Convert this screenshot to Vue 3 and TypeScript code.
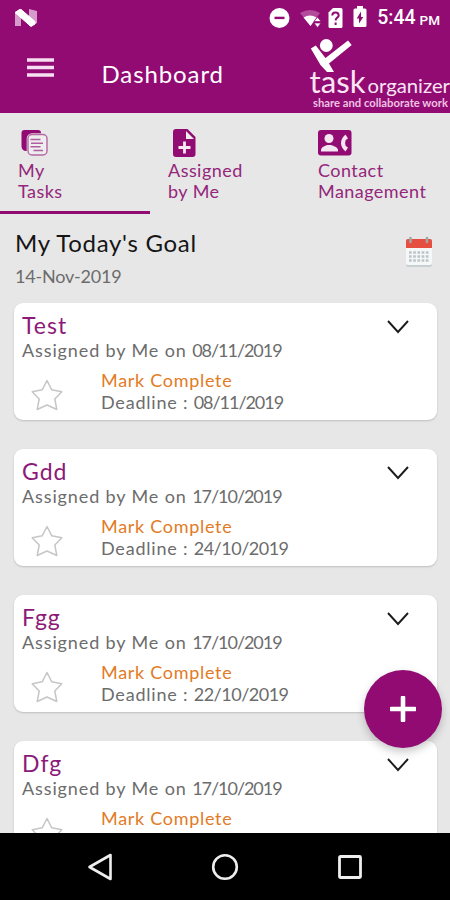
<script setup lang="ts">
interface Task {
  title: string
  assigned: string
  deadline?: string
}

const tasks: Task[] = [
  { title: 'Test', assigned: '08/11/2019', deadline: '08/11/2019' },
  { title: 'Gdd', assigned: '17/10/2019', deadline: '24/10/2019' },
  { title: 'Fgg', assigned: '17/10/2019', deadline: '22/10/2019' },
  { title: 'Dfg', assigned: '17/10/2019' },
]

// Dates with several narrow ones are set tighter.
const dateClass = (date: string): string => {
  const ones = date.split('1').length - 1
  return ones > 2 ? 'tight' : 'loose'
}
</script>

<template>
  <div class="phone">
    <header class="header">
      <div class="status">
        <svg class="nougat" width="24" height="18" viewBox="0 0 24 18">
          <path d="M1 3.500 7 0v17H1zM15 0l8 2v12l-6 3h-2z" fill="#d79bcb" />
          <path d="M1 3.500 6.500 0 21 12.500V15l-4 2.500z" fill="#fff" stroke="#fff" />
        </svg>
        <div class="indicators">
          <svg width="22" height="22" viewBox="0 0 22 22">
            <circle cx="10.500" cy="11" r="10" fill="#fff" />
            <rect x="5.500" y="9.700" width="10" height="2.400" fill="#910b73" />
          </svg>
          <svg class="wifi" width="24" height="22" viewBox="0 0 24 22">
            <path d="M1 5Q11 -1 21 5L11.500 18z" fill="#b24c9b" />
            <path d="M4.500 9.500q6.500-4 13 0l-6 8.500z" fill="#fff" />
            <path d="m18.500 9 3.500 4.500h-7zM15 15h7l-3.500 4.500z" fill="#fff" stroke="#910b73" stroke-width=".7" />
          </svg>
          <svg class="sim" width="15" height="22" viewBox="0 0 15 22">
            <path d="M5 1h8q1.500 0 1.500 1.500v17q0 1.500-1.500 1.500H2Q.5 21 .5 19.500V5.500z" fill="#fff" />
            <path d="M4.300 8.500q0-3 3.200-3t3.200 2.900c0 2-3.100 2.500-3.100 5.100M7.600 15.500v2.600" fill="none" stroke="#910b73" stroke-width="2" />
          </svg>
          <svg class="battery" width="14" height="22" viewBox="0 0 14 22">
            <path d="M4 0h6v2.500h2q1.500 0 1.500 1.500v15.500q0 1.500-1.500 1.500H2Q.5 21 .5 19.500V4Q.5 2.500 2 2.500h2z" fill="#fff" />
            <path d="M8 5.500V11h2.300L6 17.500v-5H3.700z" fill="#910b73" />
          </svg>
          <span class="clock">5:44</span><span class="meridiem">PM</span>
        </div>
      </div>
      <div class="bar">
        <svg class="burger" width="27" height="20" viewBox="0 0 27 20">
          <path d="M0 2h27M0 9.500h27M0 17h27" stroke="#f8def3" stroke-width="3.300" />
        </svg>
        <h1 class="heading">Dashboard</h1>
        <svg class="logo" width="142" height="74" viewBox="308 38 142 74">
          <g fill="#fff">
            <circle cx="326.300" cy="45.500" r="6.400" />
            <path d="m310.800 48.500 5-3L325.500 58l22.500-17.500 3.700 4.500-22.700 18.500 5 8.500h-7l-6.500-7z" />
          </g>
          <text class="logo-task" x="309.500" y="93" textLength="56" lengthAdjust="spacingAndGlyphs">task</text>
          <text class="logo-org" x="367.500" y="93" textLength="82.500" lengthAdjust="spacingAndGlyphs">organizer</text>
          <text class="logo-tag" x="313" y="106.500" textLength="135" lengthAdjust="spacingAndGlyphs">share and collaborate work</text>
        </svg>
      </div>
    </header>

    <nav class="tabs">
      <div class="tab active">
        <svg class="tab-icon tasks-icon" width="28" height="28" viewBox="0 0 28 28">
          <path d="M3.500 1H17q3 0 3 3v18H5.500q-5 0-5-5V4q0-3 3-3" fill="#910b73" />
          <rect x="7" y="5.500" width="19" height="20.500" rx="4" fill="#eee" stroke="#e7e7e7" stroke-width="2.600" />
          <rect x="7" y="5.500" width="19" height="20.500" rx="4" fill="#eee" stroke="#b767a5" stroke-width="1.400" />
          <path d="M9.500 10.500h10M10 14.200h12M9.500 17.800h10M12.500 21.500h9.500" stroke="#b05da1" stroke-width="1.400" />
        </svg>
        <span>My<br>Tasks</span>
      </div>
      <div class="tab">
        <svg class="tab-icon doc-icon" width="23" height="28" viewBox="0 0 23 28">
          <path d="M3 0h11.500l8 8v17q0 3-3 3H3q-3 0-3-3V3q0-3 3-3" fill="#910b73" />
          <path d="M13 2 21 10h-8z" fill="#eee" />
          <path d="M11.500 12.500v12M5.500 18.500h12" stroke="#f7e8f4" stroke-width="2.800" />
        </svg>
        <span>Assigned<br>by Me</span>
      </div>
      <div class="tab">
        <svg class="tab-icon contact-icon" width="34" height="26" viewBox="0 0 34 26">
          <rect width="33.500" height="25.500" rx="3" fill="#910b73" />
          <g fill="#f3e6f1">
            <circle cx="11" cy="8.500" r="4.500" />
            <path d="M3 21.500v-1.500c0-3 5-5 8-5s9 2 9 5v1.500z" />
            <path d="m27.500 4.500 2.500 4-2.300 1.500q-1.200 3 0 6l2.300 1.500-2.500 4c-6-5-6-12 0-17" />
          </g>
        </svg>
        <span>Contact<br>Management</span>
      </div>
    </nav>

    <main class="content">
      <section class="goal">
        <div>
          <h2 class="goal-title">My Today's Goal</h2>
          <p class="goal-date">14-Nov-2019</p>
        </div>
        <svg class="calendar" width="28" height="32" viewBox="0 0 28 32">
          <rect x="1" y="3" width="26" height="28" rx="2" fill="#c8d1d2" />
          <path d="M1 11h26v16q0 2-2 2H3q-2 0-2-2z" fill="#f6f7f7" />
          <path d="M3 3h22q2 0 2 2v7H1V5q0-2 2-2" fill="#e64e40" />
          <path d="M5.500 2v4M22 2v4" stroke="#a2a6aa" stroke-width="2.600" stroke-linecap="round" />
          <path d="M4 16.500h20M4 20.500h20M4 24.500h20" stroke="#bac5cc" stroke-width="2.500" stroke-dasharray="2.700 1.500" />
        </svg>
      </section>

      <article v-for="task in tasks" :key="task.title" class="card">
        <div class="card-text">
          <h3 class="card-title">{{ task.title }}</h3>
          <p class="assigned">Assigned by Me on <span :class="dateClass(task.assigned)">{{ task.assigned }}</span></p>
          <div class="card-bottom">
            <svg class="star" width="32" height="32" viewBox="0 0 32 32">
              <path d="m16 1.500 4.800 9.300 10 2-7 7.200 2 10.500-9.800-4.500-9.800 4.500 2-10.500-7-7.200 10-2z" fill="none" stroke="#c6c6c6" stroke-width="1.500" stroke-linejoin="round" />
            </svg>
            <div>
              <p class="complete">Mark Complete</p>
              <p v-if="task.deadline" class="deadline">Deadline : <span :class="dateClass(task.deadline)">{{ task.deadline }}</span></p>
            </div>
          </div>
        </div>
        <svg class="chevron" width="24" height="14" viewBox="0 0 24 14">
          <path d="m2 1 10 11 10-11" fill="none" stroke="#1b1b1b" stroke-width="1.900" />
        </svg>
      </article>
    </main>

    <button class="fab" aria-label="Add task">
      <svg width="26" height="26" viewBox="0 0 26 26">
        <path d="M13 1.500v23M1.500 13h23" stroke="#fff" stroke-width="4.600" stroke-linecap="round" />
      </svg>
    </button>

    <footer class="navbar">
      <svg width="26" height="28" viewBox="0 0 26 28">
        <path d="M23.500 2v24L2.500 14z" fill="none" stroke="#eee" stroke-width="2.600" stroke-linejoin="round" />
      </svg>
      <svg width="28" height="28" viewBox="0 0 28 28">
        <circle cx="14" cy="14" r="11.800" fill="none" stroke="#eee" stroke-width="2.600" />
      </svg>
      <svg width="26" height="26" viewBox="0 0 26 26">
        <rect x="2.500" y="2.500" width="21" height="21" rx="1" fill="none" stroke="#eee" stroke-width="2.800" />
      </svg>
    </footer>
  </div>
</template>

<style>
body {
  margin: 0;
}
</style>

<style scoped>
.phone {
  position: relative;
  display: flex;
  flex-direction: column;
  width: 450px;
  height: 900px;
  overflow: hidden;
  background: #e7e7e7;
  font-family: Lato, "Liberation Sans", sans-serif;
}
h1, h2, h3, p {
  margin: 0;
  font-weight: 400;
  white-space: nowrap;
}
svg {
  display: block;
  flex: none;
}
.header {
  flex: none;
  height: 113px;
  background: #910b73;
  color: #fff;
}
.status {
  display: flex;
  justify-content: space-between;
  height: 38px;
  padding: 0 10px 0 14px;
  box-sizing: border-box;
}
.nougat {
  margin-top: 9px;
}
.indicators {
  display: flex;
  align-items: flex-start;
  padding-top: 7px;
}
.wifi {
  margin: 1px 0 0 8px;
}
.sim {
  margin-left: 5px;
}
.battery {
  margin: -1px 0 0 10px;
}
.clock, .meridiem {
  font-family: Roboto, sans-serif;
  font-weight: 500;
  line-height: 22px;
}
.clock {
  margin-left: 10px;
  font-size: 19.500px;
}
.meridiem {
  margin: 2px 0 0 4px;
  font-size: 13.500px;
}
.bar {
  display: flex;
  height: 75px;
}
.burger {
  margin: 20px 0 0 26.500px;
}
.heading {
  width: 160px;
  margin-left: 48px;
  padding-top: 20px;
  font-size: 24px;
  line-height: 32px;
  letter-spacing: .9px;
}
.logo {
  margin-left: auto;
}
.logo text {
  fill: #fbe5f5;
  font-family: Lato, sans-serif;
}
.logo-task {
  font-size: 31px;
}
.logo-org {
  font-size: 20px;
}
.logo .logo-tag {
  font-size: 10.500px;
  font-weight: 700;
  fill: #efc2e4;
}
.tabs {
  display: grid;
  grid-template-columns: repeat(3, 1fr);
  flex: none;
  height: 101px;
}
.tab {
  padding: 16px 0 0 18px;
  box-sizing: border-box;
  color: #94267b;
  font-size: 18px;
  line-height: 21px;
  letter-spacing: .45px;
}
.active {
  border-bottom: 3px solid #910b73;
}
.tab-icon {
  height: 28px;
  margin-bottom: 3px;
}
.tasks-icon {
  margin-left: 3px;
}
.doc-icon {
  margin-left: 5px;
}
.content {
  flex: 1;
  min-height: 0;
  overflow: hidden;
  padding: 0 13px 0 14px;
}
.goal {
  display: flex;
  justify-content: space-between;
  height: 88.500px;
}
.goal-title {
  padding: 14px 0 0 1px;
  font-size: 24px;
  line-height: 30px;
  color: #151515;
  letter-spacing: .7px;
}
.goal-date {
  padding: 7px 0 0 1px;
  font-size: 18px;
  line-height: 22px;
  color: #6c6c6c;
  letter-spacing: -.2px;
}
.calendar {
  margin: 22px 4px 0 0;
}
.card {
  display: flex;
  justify-content: space-between;
  height: 117px;
  margin-bottom: 29.300px;
  padding: 8px 27px 0 8px;
  box-sizing: border-box;
  border-radius: 9px;
  background: #fff;
  box-shadow: 0 1px 2px rgba(0, 0, 0, .18);
}
.card-title {
  color: #8c1a78;
  font-size: 23px;
  line-height: 28px;
  letter-spacing: 1px;
}
.assigned, .deadline, .complete {
  font-size: 18px;
  line-height: 22px;
  color: #6c6c6c;
}
.assigned {
  letter-spacing: .88px;
}
.deadline {
  letter-spacing: .8px;
}
.tight {
  letter-spacing: -1.050px;
}
.loose {
  letter-spacing: -.5px;
}
.card-bottom {
  display: flex;
  padding-top: 8px;
}
.star {
  margin: 10px 38px 0 9px;
}
.complete {
  color: #e27b25;
  letter-spacing: .7px;
}
.chevron {
  margin-top: 9px;
}
.fab {
  position: absolute;
  left: 363.500px;
  top: 670px;
  display: flex;
  align-items: center;
  justify-content: center;
  width: 78px;
  height: 78px;
  padding: 0;
  border: 0;
  border-radius: 50%;
  background: #910b73;
  box-shadow: 0 4px 9px rgba(0, 0, 0, .22);
}
.navbar {
  display: flex;
  align-items: center;
  justify-content: space-between;
  flex: none;
  height: 67px;
  padding: 0 87px;
  box-sizing: border-box;
  background: #000;
}
</style>
